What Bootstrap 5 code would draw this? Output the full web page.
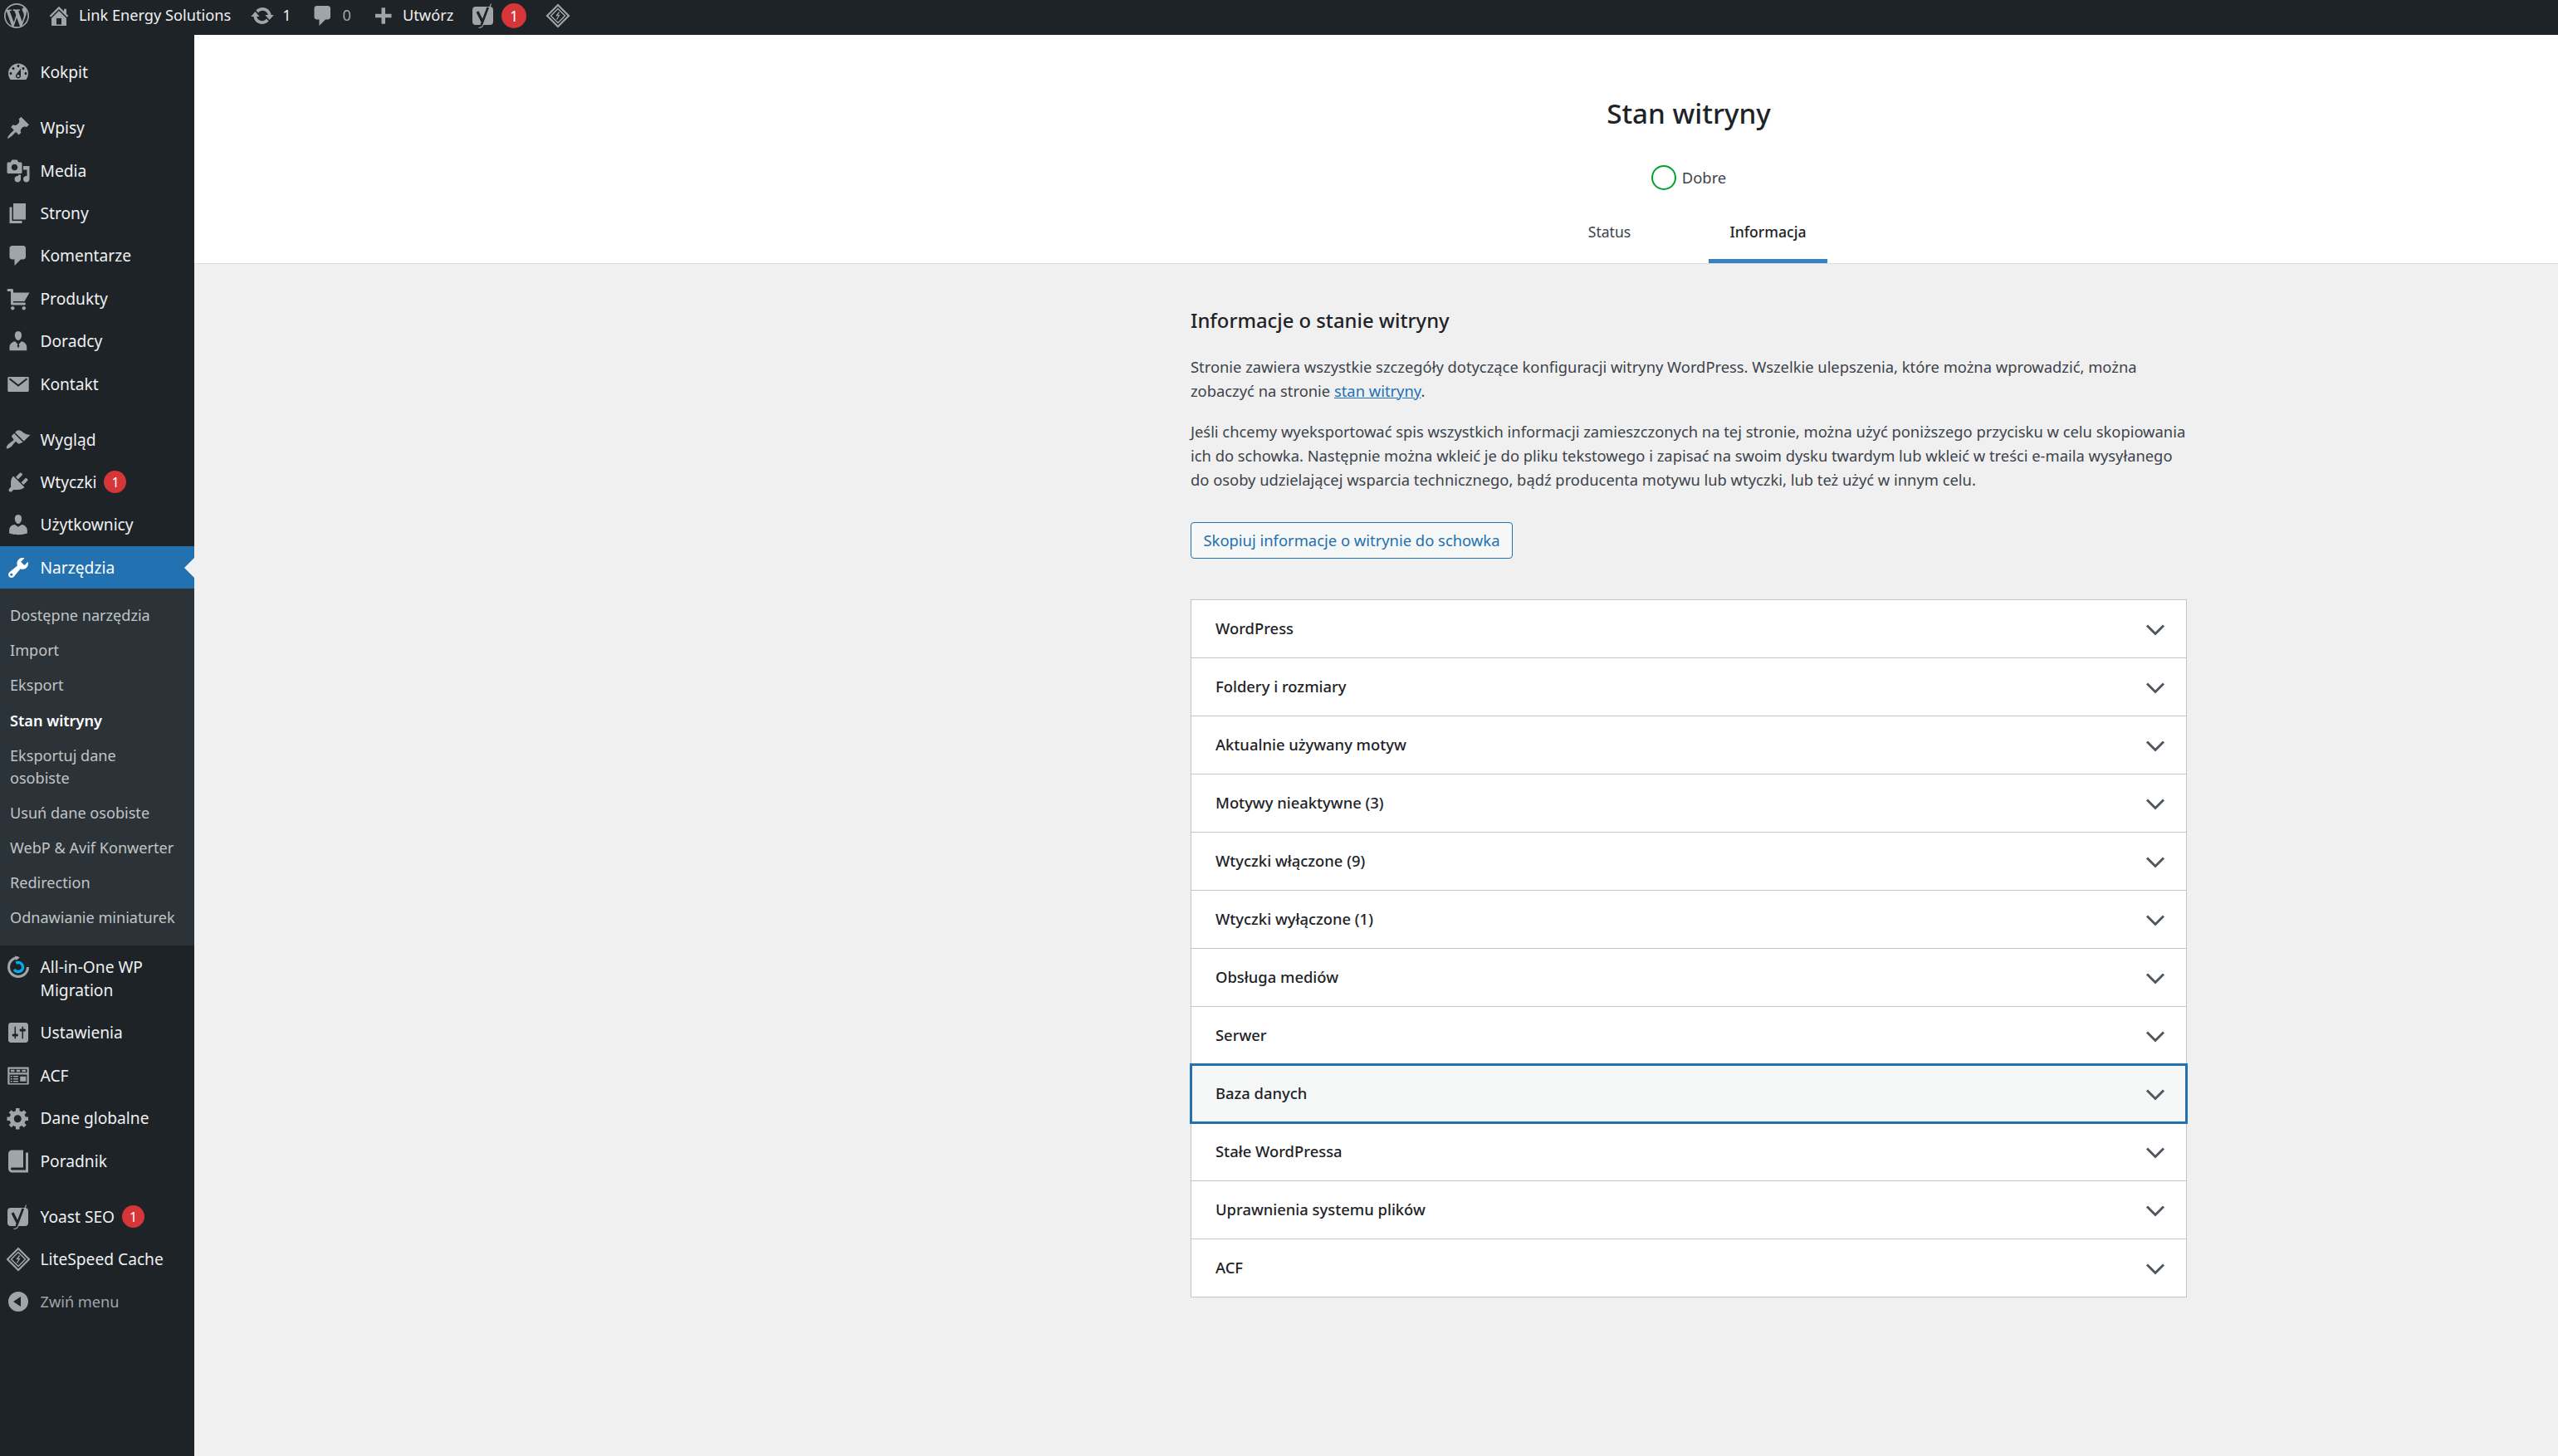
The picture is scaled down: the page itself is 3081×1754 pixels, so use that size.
<!DOCTYPE html>
<html lang="pl">
<head>
<meta charset="UTF-8">
<meta name="viewport" content="width=device-width, initial-scale=1.0">
<title>Stan witryny</title>
<link href="https://cdn.jsdelivr.net/npm/bootstrap@5.3.3/dist/css/bootstrap.min.css" rel="stylesheet">
<style>
body { font-family: "Noto Sans", "Open Sans", sans-serif; font-size: 18.35px; color: #3c434a; background: #f0f0f1; overflow: hidden; }
svg { fill: currentColor; flex: none; display: block; }
a { color: inherit; text-decoration: none; }

/* top bar */
.adminbar { height: 42px; background: #1d2327; color: #f0f0f1; font-size: 18.2px; padding-bottom: 4px; }
.adminbar svg { color: #a0a5aa; }
.bar-item { display: flex; align-items: center; gap: 9px; margin-left: 23px; }
.bar-logo { margin-left: 5px; }
.bar-home { margin-left: 21px; }
.bar-dim { color: #a0a5aa; }
.bar-count, .menu-count { display: inline-flex; align-items: center; justify-content: center; padding: 0; border-radius: 50%; background: #d63638; color: #fff; font-weight: 400; }
.bar-count { width: 30px; height: 30px; font-size: 18px; border-radius: 15px; }
.menu-count { width: 27px; height: 27px; font-size: 16px; margin-left: 9px; }

/* left menu */
.sidemenu { width: 234px; flex: none; background: #1d2327; color: #f0f0f1; font-size: 19.2px; padding-top: 19.5px; }
.menu-row { display: flex; align-items: center; height: 51.4px; padding-left: 6.5px; gap: 12px; position: relative; line-height: 28px; }
.menu-row svg { width: 30px; height: 30px; color: #a0a5aa; }
.menu-row.tall { height: 79.6px; padding-right: 10px; }
.menu-row.tall svg { align-self: flex-start; margin-top: 11px; }
.menu-row.current { background: #2271b1; color: #fff; }
.menu-row.current svg { color: #fff; }
.menu-row.current::after { content: ""; position: absolute; right: 0; top: 14px; border: 12px solid transparent; border-right-color: #f0f0f1; border-left-width: 0; }
.menu-row.dim { color: #a0a5aa; font-size: 18.2px; }
.menu-gap { height: 15.6px; }
.submenu { background: #2c3338; padding: 11px 10px 12px 12px; font-size: 18.1px; color: #c1c4c6; line-height: 27px; }
.submenu li { padding: 7.6px 0; }
.submenu li.active { color: #fff; font-weight: 600; }

/* header */
.health-head { background: #fff; border-bottom: 1px solid #dcdcde; height: 276px; padding-top: 72px; padding-left: 753px; }
.health-head h1 { font-size: 33.2px; font-weight: 500; line-height: 46px; color: #1d2327; margin: 0 0 39px; }
.health-state { height: 30px; gap: 7px; font-size: 18.4px; }
.health-ring { width: 30px; height: 30px; border: 2.5px solid #00a32a; border-radius: 50%; }
.health-tabs { display: grid; grid-template-columns: 191px 191px; margin-top: 26px; font-size: 17.6px; }
.health-tab { display: block; text-align: center; margin: 0 24px; padding: 11px 0 24px; line-height: 27px; height: 62px; }
.health-tab.active { font-weight: 500; color: #1d2327; box-shadow: inset 0 -5px 0 #3582c4; }

/* body */
.health-body { padding-left: 753px; }
.health-inner { width: 1200px; margin: 0 auto; padding-top: 52px; }
.health-inner h2 { font-size: 23.8px; font-weight: 500; line-height: 32px; color: #1d2327; margin: 0 0 24.5px; }
.health-inner p { line-height: 29px; margin: 0 0 20px; white-space: nowrap; }
.health-inner p a { color: #2271b1; text-decoration: underline; }
.copy-btn { --bs-btn-color: #2271b1; --bs-btn-bg: #f6f7f7; --bs-btn-border-color: #2271b1; --bs-btn-font-size: 18.4px; --bs-btn-padding-x: 14.5px; --bs-btn-padding-y: 0; --bs-btn-border-radius: 4px; height: 44px; margin-top: 17.5px; border-width: 1.5px; }
.health-accordion { --bs-accordion-border-radius: 0; --bs-accordion-inner-border-radius: 0; --bs-accordion-border-color: #c3c4c7; --bs-accordion-bg: #fff; --bs-accordion-btn-bg: #fff; --bs-accordion-btn-color: #1d2327; --bs-accordion-btn-padding-x: 29px; --bs-accordion-btn-padding-y: 0; --bs-accordion-btn-icon-width: 24px;
  --bs-accordion-btn-icon: url("data:image/svg+xml,%3csvg xmlns='http://www.w3.org/2000/svg' viewBox='0 0 24 24'%3e%3cpath fill='none' stroke='%2350575e' stroke-width='3' d='M2 7.500l10 10 10-10'/%3e%3c/svg%3e");
  margin-top: 49px; }
.health-accordion .accordion-button { height: 69px; font-size: 18.4px; font-weight: 500; padding-right: 25px; box-shadow: none; }
.health-accordion .accordion-button.row-focus { background: #f6f7f7; box-shadow: 0 0 0 2px #2271b1, inset 0 0 0 1px #2271b1; z-index: 3; }
</style>
</head>
<body>
<svg width="0" height="0" class="position-absolute">
  <symbol id="i-comment" viewBox="0 0 20 20"><path d="M5 2h9c1.100 0 2 .9 2 2v7c0 1.100-.9 2-2 2h-2l-5 5v-5H5c-1.100 0-2-.9-2-2V4c0-1.100.9-2 2-2z"/></symbol>
  <symbol id="i-yoast" viewBox="0 0 26 30"><rect x="0" y="4" width="25" height="22" rx="4"/><path d="M6 10l6.500 13M19 5l-8 21" fill="none" stroke="#1d2327" stroke-width="3.200"/><path d="M22.500 .5L12.500 27c-.7 1.600-2.500 2.400-5 2.500" fill="none" stroke="currentColor" stroke-width="1.100"/></symbol>
  <symbol id="i-speed" viewBox="0 0 30 30"><path d="M15 .5L29.500 15 15 29.500.5 15zM15 3.500L3.500 15 15 26.500 26.500 15z" fill-rule="evenodd"/><path d="M15 6.500L23.500 15 15 23.500 6.500 15z" fill="none" stroke="currentColor" stroke-width="1.500"/><path d="M16.500 10.500l-3 4h3l-3 5" fill="none" stroke="currentColor" stroke-width="1.300"/></symbol>
</svg>

<div class="d-flex flex-column vh-100">
  <header class="adminbar d-flex align-items-center flex-none">
    <a href="#" class="bar-logo"><svg width="30" height="30" viewBox="0 0 20 20"><path d="M20 10c0-5.510-4.490-10-10-10C4.480 0 0 4.490 0 10c0 5.520 4.480 10 10 10 5.510 0 10-4.480 10-10zM7.780 15.370L4.370 6.220c.55-.02 1.170-.08 1.170-.08.5-.06.44-1.130-.06-1.110 0 0-1.450.11-2.370.11-.18 0-.37 0-.58-.01C4.120 2.690 6.870 1.110 10 1.110c2.330 0 4.450.87 6.050 2.340-.68-.11-1.650.39-1.650 1.580 0 .74.45 1.360.9 2.100.35.61.55 1.360.55 2.460 0 1.490-1.400 5-1.400 5l-3.030-8.370c.54-.02.82-.17.82-.17.5-.05.44-1.250-.06-1.220 0 0-1.440.12-2.380.12-.87 0-2.330-.12-2.330-.12-.5-.03-.56 1.200-.06 1.220l.92.08 1.260 3.410zM17.410 10c.24-.64.74-1.870.43-4.250.7 1.290 1.050 2.710 1.050 4.250 0 3.290-1.730 6.240-4.400 7.780.97-2.590 1.940-5.200 2.920-7.780zM6.100 18.090C3.120 16.650 1.110 13.530 1.110 10c0-1.300.23-2.480.72-3.590C3.250 10.300 4.670 14.200 6.100 18.090zm4.030-6.630l2.580 6.980c-.86.29-1.760.45-2.710.45-.79 0-1.570-.11-2.290-.33.81-2.380 1.620-4.740 2.420-7.100z"/></svg></a>
    <a href="#" class="bar-item bar-home"><svg width="30" height="30" viewBox="0 0 20 20"><path d="M16 8.500l1.530 1.530-1.060 1.060L10 4.620l-6.470 6.470-1.060-1.060L10 2.500l4 4v-2h2v4zm-6-2.460l6 5.990V18H4v-5.970zM12 17v-5H8v5h4z"/></svg>Link Energy Solutions</a>
    <a href="#" class="bar-item"><svg width="30" height="30" viewBox="0 0 20 20"><path d="M10.200 3.280c3.530 0 6.430 2.610 6.920 6h2.080l-3.500 4-3.500-4h2.320c-.45-1.970-2.210-3.450-4.320-3.450-1.450 0-2.730.71-3.540 1.780L4.950 5.660C6.230 4.200 8.110 3.280 10.200 3.280zm-.4 13.440c-3.520 0-6.430-2.610-6.920-6H.8l3.500-4c1.170 1.330 2.330 2.670 3.500 4H5.480c.45 1.970 2.210 3.450 4.320 3.450 1.450 0 2.730-.71 3.540-1.780l1.710 1.950c-1.280 1.460-3.150 2.380-5.250 2.380z"/></svg>1</a>
    <a href="#" class="bar-item bar-dim"><svg width="30" height="30"><use href="#i-comment"/></svg>0</a>
    <a href="#" class="bar-item"><svg width="30" height="30" viewBox="0 0 20 20"><path d="M17 7v3h-5v5H9v-5H4V7h5V2h3v5h5z" transform="translate(0 1.500)"/></svg>Utwórz</a>
    <a href="#" class="bar-item"><svg width="26" height="30"><use href="#i-yoast"/></svg><span class="badge bar-count">1</span></a>
    <a href="#" class="bar-item"><svg width="30" height="30"><use href="#i-speed"/></svg></a>
  </header>

  <div class="d-flex flex-grow-1">
    <nav class="sidemenu">
      <ul class="list-unstyled mb-0">
        <li class="menu-row"><svg viewBox="0 0 20 20"><path d="M3.760 16h12.480c1.100-1.370 1.760-3.110 1.760-5 0-4.420-3.580-8-8-8s-8 3.580-8 8c0 1.890.66 3.630 1.760 5zM10 4c.55 0 1 .45 1 1s-.45 1-1 1-1-.45-1-1 .45-1 1-1zM6 6c.55 0 1 .45 1 1s-.45 1-1 1-1-.45-1-1 .45-1 1-1zm8 0c.55 0 1 .45 1 1s-.45 1-1 1-1-.45-1-1 .45-1 1-1zm-5.370 5.550L12 7v6c0 1.100-.9 2-2 2s-2-.9-2-2c0-.57.24-1.080.63-1.450zM4 10c.55 0 1 .45 1 1s-.45 1-1 1-1-.45-1-1 .45-1 1-1zm12 0c.55 0 1 .45 1 1s-.45 1-1 1-1-.45-1-1 .45-1 1-1zm-5 3c0-.55-.45-1-1-1s-1 .45-1 1 .45 1 1 1 1-.45 1-1z" fill-rule="evenodd"/></svg>Kokpit</li>
        <li class="menu-gap"></li>
        <li class="menu-row"><svg viewBox="0 0 20 20"><path d="M10.440 3.020l1.820-1.820 6.360 6.350-1.830 1.820c-1.050-.68-2.480-.57-3.410.36l-.75.75c-.92.93-1.040 2.350-.35 3.410l-1.830 1.820-2.410-2.410-2.800 2.790c-.42.42-3.380 2.710-3.800 2.290s1.860-3.390 2.280-3.810l2.790-2.790L4.100 9.360l1.830-1.820c1.050.69 2.480.57 3.400-.36l.75-.75c.93-.92 1.050-2.350.36-3.410z"/></svg>Wpisy</li>
        <li class="menu-row"><svg viewBox="0 0 20 20"><path d="M13 11V4c0-.55-.45-1-1-1h-1.670L9 1H5L3.670 3H2c-.55 0-1 .45-1 1v7c0 .55.45 1 1 1h10c.55 0 1-.45 1-1zM7 4.500c1.380 0 2.500 1.120 2.500 2.500S8.380 9.500 7 9.500 4.500 8.380 4.500 7 5.620 4.500 7 4.500zM14 6h5v10.500c0 1.380-1.120 2.500-2.500 2.500S14 17.880 14 16.500s1.120-2.500 2.500-2.500c.17 0 .34.02.5.05V9h-3V6zm-4 8.050V13h2v3.500c0 1.380-1.120 2.500-2.500 2.500S7 17.880 7 16.500 8.120 14 9.500 14c.17 0 .34.02.5.05z"/></svg>Media</li>
        <li class="menu-row"><svg viewBox="0 0 20 20"><path d="M6 15V2h10v13H6zm-1 1h8v2H3V5h2v11z"/></svg>Strony</li>
        <li class="menu-row"><svg><use href="#i-comment"/></svg>Komentarze</li>
        <li class="menu-row"><svg viewBox="0 0 20 20"><path d="M6 13h9c.55 0 1 .45 1 1s-.45 1-1 1H5c-.55 0-1-.45-1-1V4H2c-.55 0-1-.45-1-1s.45-1 1-1h3c.55 0 1 .45 1 1v2h13l-4 7H6v1zm-.5 3c.83 0 1.500.67 1.500 1.500S6.330 19 5.500 19 4 18.330 4 17.500 4.670 16 5.500 16zm9 0c.83 0 1.500.67 1.500 1.500s-.67 1.500-1.500 1.500-1.500-.67-1.500-1.500.67-1.500 1.500-1.500z"/></svg>Produkty</li>
        <li class="menu-row"><svg viewBox="0 0 20 20"><path d="M10 9.250c-2.270 0-2.730-3.440-2.730-3.440C7 4.020 7.820 2 9.970 2c2.160 0 2.980 2.020 2.710 3.810 0 0-.41 3.440-2.680 3.440zM7.500 10.200l2.100 2.300-.5 1.200.9 2 .9-2-.5-1.200 2.100-2.300c2.300.2 4.300 2.300 4.300 4.500v2.800H3v-2.800c0-2.200 2-4.300 4.500-4.500z"/></svg>Doradcy</li>
        <li class="menu-row"><svg viewBox="0 0 20 20"><path d="M2.500 4h15c.55 0 1 .45 1 1v10c0 .55-.45 1-1 1h-15c-.55 0-1-.45-1-1V5c0-.55.45-1 1-1z"/><path d="M3 5.500l7 5.500 7-5.500" fill="none" stroke="#1d2327" stroke-width="1.400"/></svg>Kontakt</li>
        <li class="menu-gap"></li>
        <li class="menu-row"><svg viewBox="0 0 20 20"><path d="M14.480 11.060L7.410 3.990l1.500-1.500c.5-.56 2.300-.47 3.510.32 1.210.8 1.430 1.280 2.910 2.100 1.180.64 2.450 1.260 4.450.85zm-.71.71L6.700 4.700 4.930 6.470c-.39.39-.39 1.020 0 1.410l1.060 1.060c.39.39.39 1.030 0 1.420-.6.6-1.430 1.110-2.210 1.690-.35.26-.7.53-1.010.84C1.430 13.710 0 16.060.71 16.770c.71.71 3.070-.71 4.060-1.700.3-.31.57-.66.84-1.010.58-.78 1.090-1.610 1.690-2.210.39-.39 1.020-.39 1.410 0l1.060 1.060c.39.39 1.020.39 1.410 0z"/></svg>Wygląd</li>
        <li class="menu-row"><svg viewBox="0 0 20 20"><path d="M13.110 4.360L9.870 7.600 8 5.730l3.240-3.240c.35-.34 1.050-.2 1.560.32.52.51.66 1.210.31 1.550zm-8 1.770l.91-1.120 9.010 9.010-1.190.84c-.71.71-2.630 1.160-3.820 1.160H6.140L4.900 17.260c-.59.59-1.540.59-2.120 0-.59-.58-.59-1.530 0-2.120l1.240-1.240v-3.880c0-1.130.4-3.190 1.090-3.890zm7.260 3.970l3.240-3.240c.34-.35 1.040-.21 1.550.31.52.51.66 1.210.31 1.550l-3.240 3.250z"/></svg><span class="d-flex align-items-center">Wtyczki<span class="badge menu-count">1</span></span></li>
        <li class="menu-row"><svg viewBox="0 0 20 20"><path d="M10 9.250c-2.270 0-2.730-3.440-2.730-3.440C7 4.020 7.820 2 9.970 2c2.160 0 2.980 2.020 2.710 3.810 0 0-.41 3.440-2.680 3.440zm0 2.570L12.720 10c2.390 0 4.520 2.330 4.520 4.530v2.490s-3.650 1.130-7.240 1.130c-3.650 0-7.240-1.130-7.240-1.130v-2.490c0-2.250 1.940-4.480 4.470-4.480z"/></svg>Użytkownicy</li>
        <li class="menu-row current"><svg viewBox="0 0 20 20"><path d="M16.680 9.770c-1.340 1.340-3.300 1.670-4.950.99l-5.410 6.520c-.99.99-2.590.99-3.580 0s-.99-2.590 0-3.570l6.520-5.420c-.68-1.650-.35-3.610.99-4.950 1.280-1.280 3.120-1.620 4.720-1.060l-2.890 2.890 2.820 2.820 2.860-2.870c.53 1.580.18 3.390-1.080 4.650zM3.810 16.210c.4.39 1.040.39 1.430 0 .4-.4.4-1.040 0-1.430-.39-.4-1.030-.4-1.430 0-.39.39-.39 1.030 0 1.430z"/></svg>Narzędzia</li>
        <li>
          <ul class="submenu list-unstyled mb-0">
            <li>Dostępne narzędzia</li>
            <li>Import</li>
            <li>Eksport</li>
            <li class="active">Stan witryny</li>
            <li>Eksportuj dane<br>osobiste</li>
            <li>Usuń dane osobiste</li>
            <li>WebP &amp; Avif Konwerter</li>
            <li>Redirection</li>
            <li>Odnawianie miniaturek</li>
          </ul>
        </li>
        <li class="menu-row tall"><svg viewBox="0 0 30 30"><path d="M15 3.500A11.500 11.500 0 1 0 26.500 15" fill="none" stroke="currentColor" stroke-width="3"/><path d="M11 1.500l6 2-5 3.500z"/><path d="M9.500 15a5.500 5.500 0 1 0 5.500-5.500" fill="none" stroke="#00aeef" stroke-width="3.500" transform="rotate(-30 15 15)"/></svg><span>All-in-One WP<br>Migration</span></li>
        <li class="menu-row"><svg viewBox="0 0 20 20"><path d="M18 16V4c0-1.100-.9-2-2-2H4c-1.100 0-2 .9-2 2v12c0 1.100.9 2 2 2h12c1.100 0 2-.9 2-2zM8 11h1c.55 0 1 .45 1 1s-.45 1-1 1H8v1.500c0 .28-.22.5-.5.5s-.5-.22-.5-.5V13H6c-.55 0-1-.45-1-1s.45-1 1-1h1V5.500c0-.28.22-.5.5-.5s.5.22.5.5V11zm5-2h-1c-.55 0-1-.45-1-1s.45-1 1-1h1V5.500c0-.28.22-.5.5-.5s.5.22.5.5V7h1c.55 0 1 .45 1 1s-.45 1-1 1h-1v5.500c0 .28-.22.5-.5.5s-.5-.22-.5-.5V9z"/></svg>Ustawienia</li>
        <li class="menu-row"><svg viewBox="0 0 20 20"><path fill-rule="evenodd" d="M2 3h16c.3 0 .5.2.5.5v13c0 .3-.2.5-.5.5H2c-.3 0-.5-.2-.5-.5v-13c0-.3.2-.5.5-.5zm1 1.500v3h14v-3zm0 4.500v7h14V9z"/><path d="M4 5.200h3v1.600H4zM8.500 5.200h3v1.600h-3zM13 5.200h3v1.600h-3zM3.800 10h1.400v1H3.800zM6 10h4v1H6zM3.800 12h1.400v1H3.800zM6 12h4v1H6zM3.800 14h1.400v1H3.800zM6 14h4v1H6zM11.500 10.500h4.700v4h-4.700z"/></svg>ACF</li>
        <li class="menu-row"><svg viewBox="0 0 20 20"><path d="M18 12h-2.180c-.17.7-.44 1.350-.81 1.930l1.540 1.540-2.100 2.100-1.540-1.540c-.58.36-1.230.63-1.910.79V19H8v-2.180c-.68-.16-1.330-.43-1.910-.79l-1.540 1.540-2.120-2.120 1.540-1.540c-.36-.58-.63-1.230-.79-1.910H1V9.030h2.170c.16-.7.44-1.350.8-1.940L2.430 5.550l2.100-2.100 1.540 1.540c.58-.37 1.240-.64 1.930-.81V2h3v2.180c.68.16 1.330.43 1.910.79l1.540-1.540 2.120 2.120-1.540 1.540c.36.59.64 1.240.8 1.940H18V12zm-8.500 1.500c1.660 0 3-1.340 3-3s-1.340-3-3-3-3 1.340-3 3 1.340 3 3 3z"/></svg>Dane globalne</li>
        <li class="menu-row"><svg viewBox="0 0 20 20"><path d="M16 3h2v16H5c-1.660 0-3-1.340-3-3V4c0-1.660 1.340-3 3-3h9v14H5c-.55 0-1 .45-1 1s.45 1 1 1h11V3z"/></svg>Poradnik</li>
        <li class="menu-gap"></li>
        <li class="menu-row"><svg><use href="#i-yoast"/></svg><span class="d-flex align-items-center">Yoast SEO<span class="badge menu-count">1</span></span></li>
        <li class="menu-row"><svg><use href="#i-speed"/></svg>LiteSpeed Cache</li>
        <li class="menu-row dim"><svg viewBox="0 0 20 20"><path fill-rule="evenodd" d="M18 10a8 8 0 1 1-16 0 8 8 0 0 1 16 0zm-6-4l-6 4 6 4z"/></svg>Zwiń menu</li>
      </ul>
    </nav>

    <main class="flex-grow-1">
      <div class="health-head text-center">
        <h1>Stan witryny</h1>
        <div class="health-state d-flex justify-content-center align-items-center"><span class="health-ring"></span>Dobre</div>
        <div class="health-tabs justify-content-center">
          <a href="#" class="health-tab">Status</a>
          <a href="#" class="health-tab active">Informacja</a>
        </div>
      </div>
      <div class="health-body">
        <div class="health-inner">
          <h2>Informacje o stanie witryny</h2>
          <p>Stronie zawiera wszystkie szczegóły dotyczące konfiguracji witryny WordPress. Wszelkie ulepszenia, które można wprowadzić, można<br>zobaczyć na stronie <a href="#">stan witryny</a>.</p>
          <p>Jeśli chcemy wyeksportować spis wszystkich informacji zamieszczonych na tej stronie, można użyć poniższego przycisku w celu skopiowania<br>ich do schowka. Następnie można wkleić je do pliku tekstowego i zapisać na swoim dysku twardym lub wkleić w treści e-maila wysyłanego<br>do osoby udzielającej wsparcia technicznego, bądź producenta motywu lub wtyczki, lub też użyć w innym celu.</p>
          <button type="button" class="btn copy-btn">Skopiuj informacje o witrynie do schowka</button>
          <div class="accordion health-accordion">
            <div class="accordion-item"><h3 class="accordion-header"><button class="accordion-button collapsed" type="button">WordPress</button></h3></div>
            <div class="accordion-item"><h3 class="accordion-header"><button class="accordion-button collapsed" type="button">Foldery i rozmiary</button></h3></div>
            <div class="accordion-item"><h3 class="accordion-header"><button class="accordion-button collapsed" type="button">Aktualnie używany motyw</button></h3></div>
            <div class="accordion-item"><h3 class="accordion-header"><button class="accordion-button collapsed" type="button">Motywy nieaktywne (3)</button></h3></div>
            <div class="accordion-item"><h3 class="accordion-header"><button class="accordion-button collapsed" type="button">Wtyczki włączone (9)</button></h3></div>
            <div class="accordion-item"><h3 class="accordion-header"><button class="accordion-button collapsed" type="button">Wtyczki wyłączone (1)</button></h3></div>
            <div class="accordion-item"><h3 class="accordion-header"><button class="accordion-button collapsed" type="button">Obsługa mediów</button></h3></div>
            <div class="accordion-item"><h3 class="accordion-header"><button class="accordion-button collapsed" type="button">Serwer</button></h3></div>
            <div class="accordion-item"><h3 class="accordion-header"><button class="accordion-button collapsed row-focus" type="button">Baza danych</button></h3></div>
            <div class="accordion-item"><h3 class="accordion-header"><button class="accordion-button collapsed" type="button">Stałe WordPressa</button></h3></div>
            <div class="accordion-item"><h3 class="accordion-header"><button class="accordion-button collapsed" type="button">Uprawnienia systemu plików</button></h3></div>
            <div class="accordion-item"><h3 class="accordion-header"><button class="accordion-button collapsed" type="button">ACF</button></h3></div>
          </div>
        </div>
      </div>
    </main>
  </div>
</div>
<script src="https://cdn.jsdelivr.net/npm/bootstrap@5.3.3/dist/js/bootstrap.bundle.min.js"></script>
</body>
</html>
